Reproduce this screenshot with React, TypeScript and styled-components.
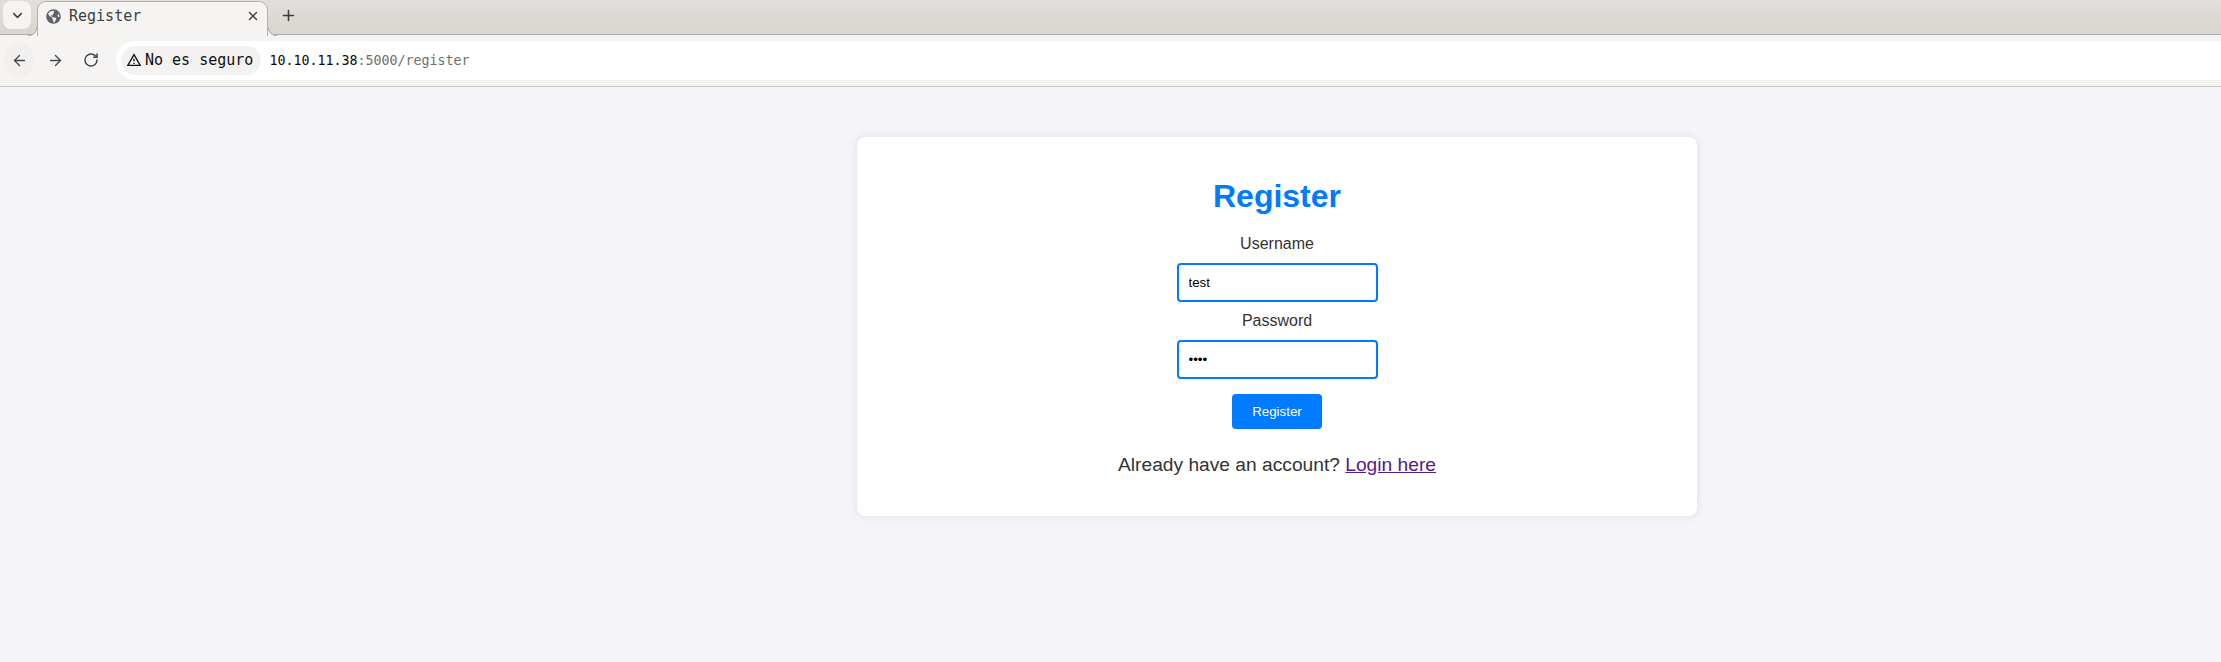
import React from "react";
import styled, { createGlobalStyle } from "styled-components";
import { ArrowLeft, ArrowRight, ChevronDown, Plus, RotateCw, X } from "lucide-react";
import { FaGlobeAmericas } from "react-icons/fa";
import { MdOutlineWarningAmber } from "react-icons/md";

const GlobalStyle = createGlobalStyle`
  html, body {
    margin: 0;
    padding: 0;
    height: 100%;
    overflow: hidden;
    background: #f4f4f9;
    font-family: "Liberation Sans", Arial, sans-serif;
  }
`;

const MONO = `"DejaVu Sans Mono", "Liberation Mono", monospace`;

const Window = styled.div`
  display: flex;
  flex-direction: column;
  height: 662px;
`;

const TabStrip = styled.div`
  height: 34px;
  flex: none;
  display: flex;
  align-items: flex-start;
  background: linear-gradient(#e1dedb, #d9d6d1);
  border-bottom: 1px solid #adabab;
`;

const TabSearch = styled.button`
  width: 28px;
  height: 28px;
  margin: 1px 0 0 3px;
  padding: 0;
  border: 0;
  border-radius: 8px;
  background: #f5f4f2;
  color: #3c3c3c;
  display: flex;
  align-items: center;
  justify-content: center;
`;

const Tab = styled.div`
  position: relative;
  box-sizing: border-box;
  width: 231px;
  height: 35px;
  margin: 1px 0 0 6px;
  padding: 0 7px 6px 8px;
  display: flex;
  align-items: center;
  background: #f5f4f2;
  border: 1px solid #b5b2ae;
  border-bottom: 0;
  border-radius: 9px 9px 0 0;
  z-index: 1;

  &::before,
  &::after {
    content: "";
    position: absolute;
    bottom: 0;
    width: 9px;
    height: 9px;
  }

  &::before {
    left: -10px;
    background: radial-gradient(circle at 0 0, transparent 8px, #b5b2ae 8px, #b5b2ae 9px, #f5f4f2 9.5px);
  }

  &::after {
    right: -10px;
    background: radial-gradient(circle at 100% 0, transparent 8px, #b5b2ae 8px, #b5b2ae 9px, #f5f4f2 9.5px);
  }
`;

const TabTitle = styled.span`
  flex: 1;
  margin-left: 8px;
  font: 15px ${MONO};
  color: #3c4043;
`;

const NewTab = styled.button`
  width: 28px;
  height: 28px;
  margin: 1px 0 0 6px;
  padding: 0;
  border: 0;
  background: none;
  color: #3c3c3c;
  display: flex;
  align-items: center;
  justify-content: center;
`;

const Toolbar = styled.div`
  height: 50px;
  flex: none;
  display: flex;
  align-items: center;
  padding: 0 0 1px 4px;
  background: #f5f4f2;
  border-bottom: 1px solid #cdc8c2;
`;

const NavButton = styled.button<{ $hover?: boolean }>`
  width: 30px;
  height: 34px;
  margin-right: 6px;
  padding: 0;
  border: 0;
  border-radius: 50%;
  background: ${(p) => (p.$hover ? "#f1f0ee" : "transparent")};
  color: #45474a;
  display: flex;
  align-items: center;
  justify-content: center;
`;

const Omnibox = styled.div`
  flex: 1;
  height: 39px;
  margin-left: 4px;
  padding-left: 5px;
  display: flex;
  align-items: center;
  background: #fff;
  border-radius: 20px 0 0 20px;
`;

const SecurityChip = styled.div`
  height: 29px;
  padding: 0 8px 0 5px;
  display: flex;
  align-items: center;
  gap: 3px;
  border-radius: 15px;
  background: #f3f2f0;
  color: #101010;
  font: 15px ${MONO};
`;

const Url = styled.div`
  margin-left: 8px;
  font: 13.3px ${MONO};
  color: #6f6f6f;
`;

const Host = styled.span`
  color: #0a0a0a;
`;

const Page = styled.main`
  flex: 1;
  padding: 50px 0 0 857px;
`;

const Card = styled.section`
  box-sizing: border-box;
  width: 840px;
  height: 379px;
  padding: 41px 0 0;
  background: #fff;
  border-radius: 8px;
  box-shadow: 0 0 10px rgba(0, 0, 0, 0.1);
  display: flex;
  flex-direction: column;
  align-items: center;
  color: #333;
`;

const Title = styled.h1`
  margin: 0 0 20px;
  font-size: 32px;
  line-height: 37px;
  font-weight: 700;
  color: #007bff;
`;

const RegisterForm = styled.form`
  text-align: center;
`;

const FieldLabel = styled.label`
  display: block;
  font-size: 16px;
  line-height: 18px;
  margin-bottom: 10px;
`;

const Input = styled.input`
  box-sizing: border-box;
  display: block;
  width: 201px;
  height: 39px;
  margin-bottom: 10px;
  padding: 0 10px;
  border: 2px solid #007bff;
  border-radius: 4px;
  outline: none;
  background: #fff;
  color: #000;
  font: 13.33px "Liberation Sans", Arial, sans-serif;
`;

const SubmitButton = styled.button`
  width: 90px;
  height: 35px;
  margin-top: 5px;
  padding: 0;
  border: 0;
  border-radius: 4px;
  background: #007bff;
  color: #fff;
  font: 13.33px "Liberation Sans", Arial, sans-serif;
`;

const Footnote = styled.p`
  margin: 25px 0 0;
  font-size: 19.2px;
  line-height: 22px;
`;

const LoginLink = styled.a`
  color: #551a8b;
  text-decoration: underline;
`;

export default function App() {
  return (
    <Window>
      <GlobalStyle />
      <TabStrip>
        <TabSearch>
          <ChevronDown size={15} strokeWidth={2.4} />
        </TabSearch>
        <Tab>
          <FaGlobeAmericas size={15} color="#5f6368" />
          <TabTitle>Register</TabTitle>
          <X size={14} strokeWidth={2.4} color="#3c3c3c" />
        </Tab>
        <NewTab>
          <Plus size={17} strokeWidth={2.2} />
        </NewTab>
      </TabStrip>
      <Toolbar>
        <NavButton $hover>
          <ArrowLeft size={17} strokeWidth={1.9} />
        </NavButton>
        <NavButton>
          <ArrowRight size={17} strokeWidth={1.9} />
        </NavButton>
        <NavButton>
          <RotateCw size={16} strokeWidth={2.2} />
        </NavButton>
        <Omnibox>
          <SecurityChip>
            <MdOutlineWarningAmber size={16} />
            No es seguro
          </SecurityChip>
          <Url>
            <Host>10.10.11.38</Host>:5000/register
          </Url>
        </Omnibox>
      </Toolbar>
      <Page>
        <Card>
          <Title>Register</Title>
          <RegisterForm>
            <FieldLabel htmlFor="username">Username</FieldLabel>
            <Input id="username" type="text" defaultValue="test" />
            <FieldLabel htmlFor="password">Password</FieldLabel>
            <Input id="password" type="password" defaultValue="test" />
            <SubmitButton type="button">Register</SubmitButton>
          </RegisterForm>
          <Footnote>
            Already have an account? <LoginLink href="#login">Login here</LoginLink>
          </Footnote>
        </Card>
      </Page>
    </Window>
  );
}
